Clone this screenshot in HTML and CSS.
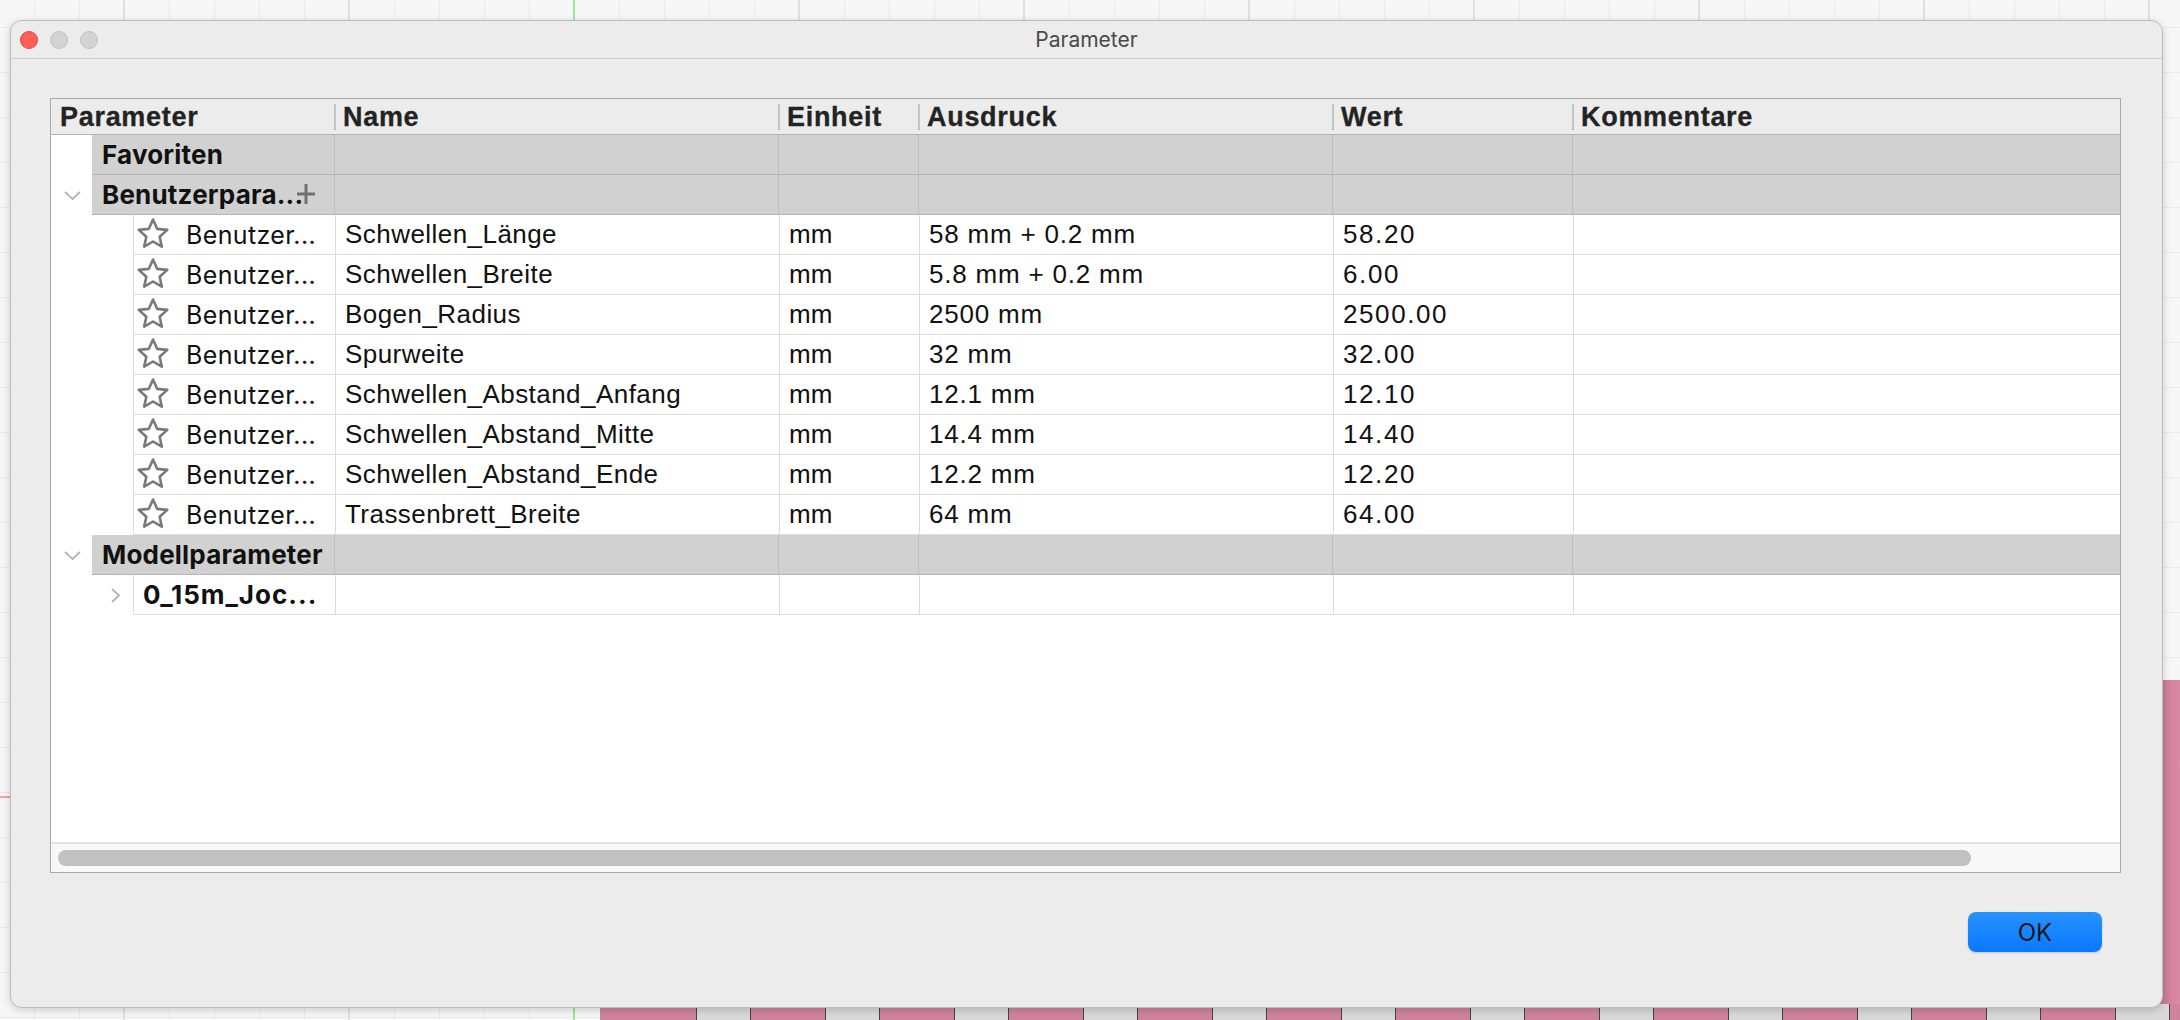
FILE: index.html
```html
<!DOCTYPE html>
<html>
<head>
<meta charset="utf-8">
<title>Parameter</title>
<link rel="stylesheet" href="styles.css">
</head>
<body>
<div class="desktop">
  <div class="deco pink-right"></div>
  <div class="deco pink-bottom"></div>
  <div class="deco axis-red"></div>
  <div class="deco axis-green"></div>
  <div class="deco axis-green-bottom"></div>

  <div class="window">
    <div class="titlebar">
      <div class="lights">
        <span class="light red"></span>
        <span class="light"></span>
        <span class="light"></span>
      </div>
      <div class="title">Parameter</div>
      <div></div>
    </div>

    <div class="content">
      <div class="table">
        <div class="thead grid">
          <div class="th first">Parameter</div>
          <div class="th">Name</div>
          <div class="th">Einheit</div>
          <div class="th">Ausdruck</div>
          <div class="th">Wert</div>
          <div class="th">Kommentare</div>
        </div>

        <div class="tbody">
          <div class="row group-row">
            <div class="indent i1"></div>
            <div class="cells grid g1">
              <div class="c c1 gname">Favoriten</div>
              <div class="c"></div><div class="c"></div><div class="c"></div><div class="c"></div><div class="c"></div>
            </div>
          </div>

          <div class="row group-row">
            <div class="indent i1"><svg class="chev-down" width="17" height="9" viewBox="0 0 17 9"><path d="M1 1 L8.5 8 L16 1" fill="none" stroke="#b3b3b3" stroke-width="1.8"/></svg></div>
            <div class="cells grid g1">
              <div class="c c1 gname">Benutzerpara...<svg class="plus" width="18" height="20" viewBox="0 0 18 20"><path d="M9 0 V20 M0 10 H18" stroke="#707070" stroke-width="3"/></svg></div>
              <div class="c"></div><div class="c"></div><div class="c"></div><div class="c"></div><div class="c"></div>
            </div>
          </div>

          <div class="row data-row">
            <div class="indent i2"></div>
            <div class="cells grid g2">
              <div class="c c1 pcell"><svg class="star" width="32" height="31" viewBox="0 0 32 31"><path d="M16 1.5 L20.11 10.84 L30.27 11.86 L22.66 18.66 L24.82 28.64 L16 23.5 L7.18 28.64 L9.34 18.66 L1.73 11.86 L11.89 10.84 Z" fill="none" stroke="#7a7a7a" stroke-width="2.6" stroke-linejoin="round"/></svg><span>Benutzer...</span></div>
              <div class="c nm">Schwellen_Länge</div>
              <div class="c">mm</div>
              <div class="c expr">58 mm + 0.2 mm</div>
              <div class="c val">58.20</div>
              <div class="c"></div>
            </div>
          </div>

          <div class="row data-row">
            <div class="indent i2"></div>
            <div class="cells grid g2">
              <div class="c c1 pcell"><svg class="star" width="32" height="31" viewBox="0 0 32 31"><path d="M16 1.5 L20.11 10.84 L30.27 11.86 L22.66 18.66 L24.82 28.64 L16 23.5 L7.18 28.64 L9.34 18.66 L1.73 11.86 L11.89 10.84 Z" fill="none" stroke="#7a7a7a" stroke-width="2.6" stroke-linejoin="round"/></svg><span>Benutzer...</span></div>
              <div class="c nm">Schwellen_Breite</div>
              <div class="c">mm</div>
              <div class="c expr">5.8 mm + 0.2 mm</div>
              <div class="c val">6.00</div>
              <div class="c"></div>
            </div>
          </div>

          <div class="row data-row">
            <div class="indent i2"></div>
            <div class="cells grid g2">
              <div class="c c1 pcell"><svg class="star" width="32" height="31" viewBox="0 0 32 31"><path d="M16 1.5 L20.11 10.84 L30.27 11.86 L22.66 18.66 L24.82 28.64 L16 23.5 L7.18 28.64 L9.34 18.66 L1.73 11.86 L11.89 10.84 Z" fill="none" stroke="#7a7a7a" stroke-width="2.6" stroke-linejoin="round"/></svg><span>Benutzer...</span></div>
              <div class="c nm">Bogen_Radius</div>
              <div class="c">mm</div>
              <div class="c expr">2500 mm</div>
              <div class="c val">2500.00</div>
              <div class="c"></div>
            </div>
          </div>

          <div class="row data-row">
            <div class="indent i2"></div>
            <div class="cells grid g2">
              <div class="c c1 pcell"><svg class="star" width="32" height="31" viewBox="0 0 32 31"><path d="M16 1.5 L20.11 10.84 L30.27 11.86 L22.66 18.66 L24.82 28.64 L16 23.5 L7.18 28.64 L9.34 18.66 L1.73 11.86 L11.89 10.84 Z" fill="none" stroke="#7a7a7a" stroke-width="2.6" stroke-linejoin="round"/></svg><span>Benutzer...</span></div>
              <div class="c nm">Spurweite</div>
              <div class="c">mm</div>
              <div class="c expr">32 mm</div>
              <div class="c val">32.00</div>
              <div class="c"></div>
            </div>
          </div>

          <div class="row data-row">
            <div class="indent i2"></div>
            <div class="cells grid g2">
              <div class="c c1 pcell"><svg class="star" width="32" height="31" viewBox="0 0 32 31"><path d="M16 1.5 L20.11 10.84 L30.27 11.86 L22.66 18.66 L24.82 28.64 L16 23.5 L7.18 28.64 L9.34 18.66 L1.73 11.86 L11.89 10.84 Z" fill="none" stroke="#7a7a7a" stroke-width="2.6" stroke-linejoin="round"/></svg><span>Benutzer...</span></div>
              <div class="c nm">Schwellen_Abstand_Anfang</div>
              <div class="c">mm</div>
              <div class="c expr">12.1 mm</div>
              <div class="c val">12.10</div>
              <div class="c"></div>
            </div>
          </div>

          <div class="row data-row">
            <div class="indent i2"></div>
            <div class="cells grid g2">
              <div class="c c1 pcell"><svg class="star" width="32" height="31" viewBox="0 0 32 31"><path d="M16 1.5 L20.11 10.84 L30.27 11.86 L22.66 18.66 L24.82 28.64 L16 23.5 L7.18 28.64 L9.34 18.66 L1.73 11.86 L11.89 10.84 Z" fill="none" stroke="#7a7a7a" stroke-width="2.6" stroke-linejoin="round"/></svg><span>Benutzer...</span></div>
              <div class="c nm">Schwellen_Abstand_Mitte</div>
              <div class="c">mm</div>
              <div class="c expr">14.4 mm</div>
              <div class="c val">14.40</div>
              <div class="c"></div>
            </div>
          </div>

          <div class="row data-row">
            <div class="indent i2"></div>
            <div class="cells grid g2">
              <div class="c c1 pcell"><svg class="star" width="32" height="31" viewBox="0 0 32 31"><path d="M16 1.5 L20.11 10.84 L30.27 11.86 L22.66 18.66 L24.82 28.64 L16 23.5 L7.18 28.64 L9.34 18.66 L1.73 11.86 L11.89 10.84 Z" fill="none" stroke="#7a7a7a" stroke-width="2.6" stroke-linejoin="round"/></svg><span>Benutzer...</span></div>
              <div class="c nm">Schwellen_Abstand_Ende</div>
              <div class="c">mm</div>
              <div class="c expr">12.2 mm</div>
              <div class="c val">12.20</div>
              <div class="c"></div>
            </div>
          </div>

          <div class="row data-row">
            <div class="indent i2"></div>
            <div class="cells grid g2">
              <div class="c c1 pcell"><svg class="star" width="32" height="31" viewBox="0 0 32 31"><path d="M16 1.5 L20.11 10.84 L30.27 11.86 L22.66 18.66 L24.82 28.64 L16 23.5 L7.18 28.64 L9.34 18.66 L1.73 11.86 L11.89 10.84 Z" fill="none" stroke="#7a7a7a" stroke-width="2.6" stroke-linejoin="round"/></svg><span>Benutzer...</span></div>
              <div class="c nm">Trassenbrett_Breite</div>
              <div class="c">mm</div>
              <div class="c expr">64 mm</div>
              <div class="c val">64.00</div>
              <div class="c"></div>
            </div>
          </div>

          <div class="row group-row">
            <div class="indent i1"><svg class="chev-down" width="17" height="9" viewBox="0 0 17 9"><path d="M1 1 L8.5 8 L16 1" fill="none" stroke="#b3b3b3" stroke-width="1.8"/></svg></div>
            <div class="cells grid g1">
              <div class="c c1 gname">Modellparameter</div>
              <div class="c"></div><div class="c"></div><div class="c"></div><div class="c"></div><div class="c"></div>
            </div>
          </div>

          <div class="row data-row">
            <div class="indent i2 right-chev"><svg class="chev-right" width="9" height="15" viewBox="0 0 9 15"><path d="M1 1 L8 7.5 L1 14" fill="none" stroke="#b3b3b3" stroke-width="1.8"/></svg></div>
            <div class="cells grid g2">
              <div class="c c1 bold-name">0_15m_Joc...</div>
              <div class="c"></div><div class="c"></div><div class="c"></div><div class="c"></div><div class="c"></div>
            </div>
          </div>

          <div class="filler"></div>
        </div>

        <div class="hscroll"><div class="thumb"></div></div>
      </div>

      <div class="buttons">
        <button class="ok">OK</button>
      </div>
    </div>
  </div>
</div>
</body>
</html>
```

FILE: styles.css
```css
* { box-sizing: border-box; }

html, body {
  margin: 0;
  padding: 0;
}

body {
  width: 2180px;
  height: 1020px;
  overflow: hidden;
  font-family: "Liberation Sans", Arial, sans-serif;
}

.desktop {
  position: relative;
  width: 2180px;
  height: 1020px;
  padding: 20px 0 0 10px;
  background-color: #f7f7f7;
  background-image:
    linear-gradient(to right, #e0e0e0 2px, transparent 2px),
    linear-gradient(to right, #ebebeb 1px, transparent 1px),
    linear-gradient(to bottom, #ebebeb 1px, transparent 1px);
  background-size: 225px 100%, 45px 100%, 100% 45px;
  background-position: 123px 0, 34px 0, 0 27px;
}

.deco { position: absolute; }

.pink-right {
  left: 2160px;
  top: 680px;
  width: 20px;
  height: 340px;
  background: linear-gradient(to right, #c97a93, #dc8ba6);
}

.pink-bottom {
  left: 600px;
  top: 1004px;
  width: 1580px;
  height: 16px;
  background: repeating-linear-gradient(to right,
    #d0839c 0, #d0839c 74px,
    #444 74px, #444 75px,
    #d9d9d9 75px, #d9d9d9 128px,
    #444 128px, #444 129px);
  background-position: 22px 0;
}

.axis-red {
  left: 0;
  top: 796px;
  width: 12px;
  height: 2px;
  background: #f2a3a3;
}

.axis-green {
  left: 573px;
  top: 0;
  width: 2px;
  height: 22px;
  background: #9fe39f;
}

.axis-green-bottom {
  left: 573px;
  top: 1004px;
  width: 2px;
  height: 16px;
  background: #9fe39f;
}

.window {
  position: relative;
  width: 2153px;
  height: 988px;
  background: #ececec;
  border: 1px solid #bcbcbc;
  border-radius: 12px;
  box-shadow: 0 2px 8px rgba(0, 0, 0, 0.18);
  display: flex;
  flex-direction: column;
  overflow: hidden;
}

.titlebar {
  height: 38px;
  border-bottom: 1px solid #cdcdcd;
  display: grid;
  grid-template-columns: 1fr auto 1fr;
  align-items: center;
}

.lights {
  display: flex;
  gap: 12px;
  padding-left: 9px;
}

.light {
  width: 18px;
  height: 18px;
  border-radius: 50%;
  background: #d3d3d3;
  border: 1px solid #c2c2c2;
}

.light.red {
  background: #fe5f57;
  border-color: #e2463f;
}

.title {
  font-family: Inter, "Liberation Sans", sans-serif;
  font-size: 21px;
  color: #4a4a4a;
}

.content {
  flex: 1;
  padding: 39px 41px 0 39px;
  display: flex;
  flex-direction: column;
}

.table {
  height: 775px;
  border: 1px solid #a9a9a9;
  background: #fff;
  display: flex;
  flex-direction: column;
}

.grid {
  display: grid;
}

.thead {
  height: 36px;
  background: #ececec;
  border-bottom: 1px solid #b3b3b3;
  grid-template-columns: 283px 444px 140px 414px 240px 1fr;
  align-items: center;
}

.th {
  height: 26px;
  line-height: 26px;
  border-left: 2px solid #c3c3c3;
  padding-left: 7px;
  font-family: "Liberation Sans", Arial, sans-serif;
  font-weight: bold;
  font-size: 27px;
  letter-spacing: 0.7px;
  color: #232323;
  white-space: nowrap;
  -webkit-text-stroke: 0.3px #232323;
}

.th.first {
  border-left: none;
  padding-left: 9px;
}

.tbody {
  flex: 1;
  display: flex;
  flex-direction: column;
}

.row {
  height: 40px;
  display: flex;
}

.indent {
  flex: none;
  background: #fff;
  display: flex;
  align-items: center;
}

.i1 { width: 41px; justify-content: flex-start; padding-left: 13px; }
.i2 { width: 82px; }
.right-chev { padding-left: 60px; }

.cells {
  flex: 1;
  height: 40px;
}

.g1 {
  grid-template-columns: 242px 444px 140px 414px 240px 1fr;
  background: #d1d1d1;
  border-bottom: 1px solid #b4b4b4;
}

.g2 {
  grid-template-columns: 201px 444px 140px 414px 240px 1fr;
  border-bottom: 1px solid #dddddd;
  border-left: 1px solid #dddddd;
}

.c {
  display: flex;
  align-items: center;
  padding-left: 9px;
  font-size: 26px;
  color: #111;
  white-space: nowrap;
  overflow: visible;
}

.g1 .c + .c { border-left: 1px solid #bdbdbd; }
.g2 .c + .c { border-left: 1px solid #dddddd; }

.gname {
  padding-left: 10px;
  font-family: Inter, "Liberation Sans", sans-serif;
  font-weight: bold;
  font-size: 26px;
  letter-spacing: 0.2px;
  color: #111;
}

.plus {
  margin-left: -6px;
  margin-top: -2px;
}

.pcell {
  padding-left: 3px;
  font-family: Inter, "Liberation Sans", sans-serif;
  font-size: 25px;
  letter-spacing: 0.35px;
}

.star {
  flex: none;
  margin-right: 17px;
  margin-top: -2px;
}

.nm { letter-spacing: 0.45px; }

.expr { letter-spacing: 0.8px; }

.val { letter-spacing: 1.6px; }

.bold-name {
  font-family: Inter, "Liberation Sans", sans-serif;
  font-weight: bold;
  font-size: 26px;
  letter-spacing: 1px;
  padding-left: 9px;
}

.filler {
  flex: 1;
  background: #fff;
}

.hscroll {
  height: 30px;
  background: #f8f8f8;
  border-top: 2px solid #e3e3e3;
  padding: 6px 0 0 7px;
}

.thumb {
  width: 1913px;
  height: 16px;
  border-radius: 8px;
  background: #c1c1c1;
}

.buttons {
  display: flex;
  justify-content: flex-end;
  padding-top: 39px;
  padding-right: 19px;
}

.ok {
  width: 134px;
  height: 40px;
  border: none;
  border-radius: 8px;
  background: linear-gradient(to bottom, #2792ff, #0a78ff);
  box-shadow: 0 1px 2px rgba(0, 0, 0, 0.18);
  font-family: Inter, "Liberation Sans", sans-serif;
  font-size: 24px;
  color: #151515;
  padding: 0;
}
```
